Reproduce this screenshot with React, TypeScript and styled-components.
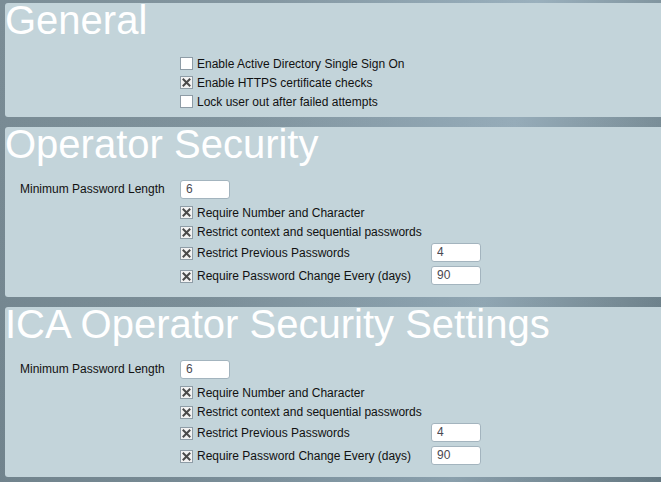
import React from "react";
import styled, { createGlobalStyle } from "styled-components";

const Global = createGlobalStyle`
  html, body { margin: 0; padding: 0; }
  body { font-family: "Liberation Sans", Arial, sans-serif; overflow: hidden; }
`;

const Page = styled.div`
  min-height: 100vh;
  box-sizing: border-box;
  padding: 3px 0 5px 5px;
  display: flex;
  flex-direction: column;
  gap: 10px;
  background:
    linear-gradient(to bottom, rgba(0, 0, 0, 0) 0%, rgba(20, 40, 50, 0.12) 100%),
    linear-gradient(100deg, #7b8d96 0%, #8497a1 35%, #93a9b6 62%, #9ab0bd 72%, #7f939d 90%, #6f838d 100%);
`;

const Panel = styled.section<{ $pb: number }>`
  background: #c3d4da;
  border-radius: 3px 0 0 3px;
  display: flex;
  flex-direction: column;
  padding-bottom: ${(p) => p.$pb}px;
`;

const Heading = styled.h2`
  margin: 0;
  font-family: "Liberation Sans", Arial, sans-serif;
  font-weight: normal;
  font-size: 40px;
  line-height: 34px;
  height: 34px;
  color: #ffffff;
  white-space: nowrap;
`;

const Body = styled.div<{ $pt: number }>`
  display: flex;
  flex-direction: column;
  padding-top: ${(p) => p.$pt}px;
`;

const Row = styled.div<{ $h: number }>`
  display: grid;
  grid-template-columns: 175px 251px auto;
  align-items: center;
  height: ${(p) => p.$h}px;
  font-size: 12px;
  color: #111;
`;

const Label = styled.span`
  padding-left: 15px;
  white-space: nowrap;
`;

const CheckLabel = styled.label<{ $nudge?: boolean }>`
  grid-column: 2;
  display: flex;
  align-items: center;
  gap: 4px;
  white-space: nowrap;
  margin-top: ${(p) => (p.$nudge ? 2 : 0)}px;
`;

const Box = styled.span<{ $checked: boolean }>`
  width: 13px;
  height: 13px;
  box-sizing: border-box;
  border: 1px solid #8e9ca6;
  background: ${(p) => (p.$checked ? "#f2f2f2" : "#ffffff")};
  display: inline-flex;
  align-items: center;
  justify-content: center;
  flex: none;
`;

const Field = styled.input`
  width: 50px;
  height: 19px;
  box-sizing: border-box;
  border: 1px solid #a3b4be;
  border-radius: 3px;
  background: #fff;
  padding: 0 5px;
  font-family: "Liberation Sans", Arial, sans-serif;
  font-size: 12px;
  color: #4a4850;
  outline: none;
`;

const InputCell = styled.div<{ $col: number }>`
  grid-column: ${(p) => p.$col};
  display: flex;
  align-items: center;
`;

function Check({ checked, text, nudge }: { checked: boolean; text: string; nudge?: boolean }) {
  return (
    <CheckLabel $nudge={nudge}>
      <Box $checked={checked}>
        {checked && (
          <svg width="9" height="9" viewBox="0 0 9 9">
            <path d="M1.5 1.5 L7.5 7.5 M7.5 1.5 L1.5 7.5" stroke="#4a4a4a" strokeWidth="2" strokeLinecap="square" />
          </svg>
        )}
      </Box>
      <span>{text}</span>
    </CheckLabel>
  );
}

function SecuritySection({ title }: { title: string }) {
  return (
    <Panel $pb={11}>
      <Heading>{title}</Heading>
      <Body $pt={16}>
        <Row $h={24}>
          <Label>Minimum Password Length</Label>
          <InputCell $col={2}>
            <Field readOnly defaultValue="6" />
          </InputCell>
        </Row>
        <Row $h={23}>
          <Check checked text="Require Number and Character" />
        </Row>
        <Row $h={16}>
          <Check checked text="Restrict context and sequential passwords" />
        </Row>
        <Row $h={24}>
          <Check checked nudge text="Restrict Previous Passwords" />
          <InputCell $col={3}>
            <Field readOnly defaultValue="4" />
          </InputCell>
        </Row>
        <Row $h={22}>
          <Check checked nudge text="Require Password Change Every (days)" />
          <InputCell $col={3}>
            <Field readOnly defaultValue="90" />
          </InputCell>
        </Row>
      </Body>
    </Panel>
  );
}

export default function App() {
  return (
    <>
      <Global />
      <Page>
        <Panel $pb={6}>
          <Heading>General</Heading>
          <Body $pt={17}>
            <Row $h={19}>
              <Check checked={false} text="Enable Active Directory Single Sign On" />
            </Row>
            <Row $h={19}>
              <Check checked text="Enable HTTPS certificate checks" />
            </Row>
            <Row $h={19}>
              <Check checked={false} text="Lock user out after failed attempts" />
            </Row>
          </Body>
        </Panel>
        <SecuritySection title="Operator Security" />
        <SecuritySection title="ICA Operator Security Settings" />
      </Page>
    </>
  );
}
